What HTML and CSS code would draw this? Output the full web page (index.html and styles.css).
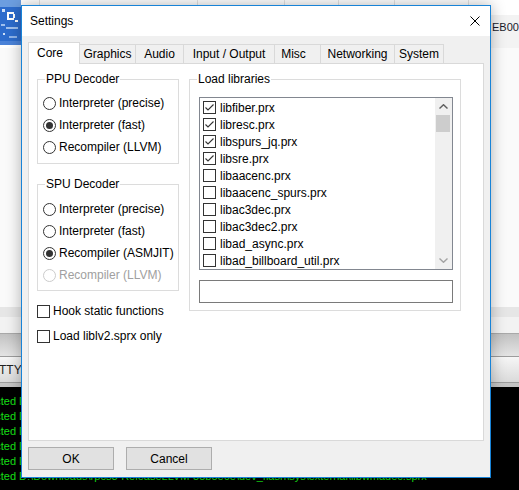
FILE: index.html
```html
<!DOCTYPE html>
<html>
<head>
<meta charset="utf-8">
<title>Settings</title>
<link rel="stylesheet" href="styles.css">
</head>
<body>
<div class="screen">
  <div class="app">
    <div class="app-head">
      <div class="app-icon">
        <svg width="21" height="45" viewBox="0 0 21 45">
          <rect width="21" height="45" fill="#2d6ccc"/>
          <rect width="21" height="7" fill="#6c9ee0"/>
          <rect x="2" y="9" width="3" height="3" fill="#cfe0f7"/>
          <rect x="7" y="12" width="2" height="8" fill="#ffffff"/>
          <rect x="9" y="12" width="5" height="2" fill="#ffffff"/>
          <rect x="9" y="18" width="5" height="2" fill="#ffffff"/>
          <rect x="13" y="14" width="2" height="4" fill="#ffffff"/>
          <rect x="15" y="20" width="3" height="2" fill="#ffffff"/>
          <rect x="1" y="24" width="4" height="2" fill="#9fc0ee"/>
          <rect x="6" y="27" width="12" height="2" fill="#9fc0ee"/>
          <rect x="3" y="33" width="2" height="2" fill="#cfe0f7"/>
          <rect x="9" y="36" width="8" height="2" fill="#8fb4ea"/>
          <rect x="0" y="41" width="21" height="4" fill="#4a82d8"/>
        </svg>
      </div>
      <div class="app-table">
        <div class="app-cols">
          <span class="col c1"></span><span class="col c2"></span><span class="col c3"></span><span class="col c4"></span><span class="col c5"></span><span class="col c6"></span>
        </div>
        <div class="app-row"><span class="serial">EB006</span></div>
      </div>
    </div>
    <div class="app-list"></div>
    <div class="app-bar1"></div>
    <div class="app-bar2"></div>
    <div class="app-grad"></div>
    <div class="app-tabrow"><span class="tty">TTY</span></div>
    <div class="app-under"></div>
    <div class="console">
      <div class="log">Detected D:\Downloads\rpcs3-ReleaseLLVM-55b5e6e\dev_flash\sys\external\libsre.sprx</div>
      <div class="log">Detected D:\Downloads\rpcs3-ReleaseLLVM-55b5e6e\dev_flash\sys\external\libspurs_jq.sprx</div>
      <div class="log">Detected D:\Downloads\rpcs3-ReleaseLLVM-55b5e6e\dev_flash\sys\external\libsync2.sprx</div>
      <div class="log">Detected D:\Downloads\rpcs3-ReleaseLLVM-55b5e6e\dev_flash\sys\external\libusbd.sprx</div>
      <div class="log">Detected D:\Downloads\rpcs3-ReleaseLLVM-55b5e6e\dev_flash\sys\external\libvdec.sprx</div>
      <div class="log">Detected D:\Downloads\rpcs3-ReleaseLLVM-55b5e6e\dev_flash\sys\external\libwmadec.sprx</div>
    </div>
  </div>

  <div class="dialog">
    <div class="titlebar">
      <span class="title">Settings</span>
      <svg class="close" width="10" height="10" viewBox="0 0 10 10"><path d="M0.5 0.5 L9.5 9.5 M9.5 0.5 L0.5 9.5" stroke="#000" stroke-width="1" fill="none"/></svg>
    </div>
    <div class="dlg-body">
      <div class="tabbar">
        <span class="tab active t-core">Core</span>
        <span class="tab t-gfx">Graphics</span>
        <span class="tab t-audio">Audio</span>
        <span class="tab t-io">Input / Output</span>
        <span class="tab t-misc">Misc</span>
        <span class="tab t-net">Networking</span>
        <span class="tab t-sys">System</span>
      </div>
      <div class="pane">
        <div class="col-left">
          <fieldset class="group ppu">
            <legend>PPU Decoder</legend>
            <label class="opt"><span class="radio"></span>Interpreter (precise)</label>
            <label class="opt"><span class="radio on"></span>Interpreter (fast)</label>
            <label class="opt"><span class="radio"></span>Recompiler (LLVM)</label>
          </fieldset>
          <fieldset class="group spu">
            <legend>SPU Decoder</legend>
            <label class="opt"><span class="radio"></span>Interpreter (precise)</label>
            <label class="opt"><span class="radio"></span>Interpreter (fast)</label>
            <label class="opt"><span class="radio on"></span>Recompiler (ASMJIT)</label>
            <label class="opt disabled"><span class="radio"></span>Recompiler (LLVM)</label>
          </fieldset>
          <div class="checks">
            <label class="opt"><span class="check"></span>Hook static functions</label>
            <label class="opt"><span class="check"></span>Load liblv2.sprx only</label>
          </div>
        </div>
        <fieldset class="group libs">
          <legend>Load libraries</legend>
          <div class="listbox">
            <div class="items">
              <div class="item"><span class="check"><svg width="11" height="11" viewBox="0 0 11 11"><path d="M1.5 5.5 L4 8 L9.5 2.5" stroke="#333" stroke-width="1.1" fill="none"/></svg></span>libfiber.prx</div>
              <div class="item"><span class="check"><svg width="11" height="11" viewBox="0 0 11 11"><path d="M1.5 5.5 L4 8 L9.5 2.5" stroke="#333" stroke-width="1.1" fill="none"/></svg></span>libresc.prx</div>
              <div class="item"><span class="check"><svg width="11" height="11" viewBox="0 0 11 11"><path d="M1.5 5.5 L4 8 L9.5 2.5" stroke="#333" stroke-width="1.1" fill="none"/></svg></span>libspurs_jq.prx</div>
              <div class="item"><span class="check"><svg width="11" height="11" viewBox="0 0 11 11"><path d="M1.5 5.5 L4 8 L9.5 2.5" stroke="#333" stroke-width="1.1" fill="none"/></svg></span>libsre.prx</div>
              <div class="item"><span class="check"></span>libaacenc.prx</div>
              <div class="item"><span class="check"></span>libaacenc_spurs.prx</div>
              <div class="item"><span class="check"></span>libac3dec.prx</div>
              <div class="item"><span class="check"></span>libac3dec2.prx</div>
              <div class="item"><span class="check"></span>libad_async.prx</div>
              <div class="item"><span class="check"></span>libad_billboard_util.prx</div>
            </div>
            <div class="vscroll">
              <span class="sb-btn"><svg width="9" height="5" viewBox="0 0 9 5"><path d="M0.5 4.5 L4.5 0.7 L8.5 4.5" stroke="#606060" stroke-width="1.4" fill="none"/></svg></span>
              <span class="thumb"></span>
              <span class="track"></span>
              <span class="sb-btn"><svg width="9" height="5" viewBox="0 0 9 5"><path d="M0.5 0.5 L4.5 4.3 L8.5 0.5" stroke="#a3a3a3" stroke-width="1.4" fill="none"/></svg></span>
            </div>
          </div>
          <div class="textbox"></div>
        </fieldset>
      </div>
      <div class="buttons">
        <button class="btn" type="button">OK</button>
        <button class="btn" type="button">Cancel</button>
      </div>
    </div>
  </div>
</div>
</body>
</html>
```
FILE: styles.css
```css
* { box-sizing: border-box; }
html, body { margin: 0; padding: 0; }
body {
  width: 519px;
  height: 490px;
  overflow: hidden;
  font-family: "Liberation Sans", Arial, sans-serif;
  font-size: 12px;
  color: #000;
}
.screen {
  position: relative;
  width: 519px;
  height: 490px;
  overflow: hidden;
  background: #fff;
}

/* ---------- background application ---------- */
.app { display: flex; flex-direction: column; height: 100%; }
.app-head { display: flex; height: 48px; flex: none; }
.app-icon { width: 21px; height: 45px; flex: none; }
.app-icon svg { display: block; }
.app-table { flex: 1; display: flex; flex-direction: column; }
.app-cols { height: 15px; display: flex; background: #fff; flex: none; }
.app-cols .col { height: 100%; border-right: 1px solid #e3e3e3; flex: none; }
.c1 { width: 19px; }
.c2 { width: 158px; }
.c3 { width: 87px; }
.c4 { width: 54px; }
.c5 { width: 56px; }
.c6 { width: 74px; }
.app-row {
  flex: 1;
  background: #f3f3f3;
  padding: 5px 0 0 471px;
  line-height: 14px;
  white-space: nowrap;
  overflow: hidden;
}
.serial { color: #1a1a2a; font-size: 11px; }
.app-list { height: 259px; flex: none; background: #fafafa; }
.app-bar1 { height: 10px; flex: none; background: #e6e6e6; }
.app-bar2 { height: 17px; flex: none; background: #f2f2f2; border-bottom: 1px solid #a9a9a9; }
.app-grad { height: 23px; flex: none; background: linear-gradient(#c2c2c2, #e4e4e4); border-bottom: 1px solid #9c9c9c; }
.app-tabrow {
  height: 26px;
  flex: none;
  background: linear-gradient(#f6f6f6, #dadada);
  border-bottom: 1px solid #9c9c9c;
  display: flex;
  align-items: center;
}
.tty { margin-left: -1px; font-size: 12px; color: #222; }
.app-under { height: 4px; flex: none; background: #c4c4c4; }
.console {
  flex: 1;
  background: #000;
  padding-top: 7px;
  overflow: hidden;
}
.log {
  color: #16e016;
  font-size: 11px;
  line-height: 15px;
  white-space: nowrap;
  margin-left: -28px;
}

/* ---------- dialog ---------- */
.dialog {
  position: absolute;
  left: 21px;
  top: 5px;
  width: 470px;
  height: 473px;
  border: 1px solid #1883d7;
  background: #f0f0f0;
  display: flex;
  flex-direction: column;
  box-shadow: 0 0 14px rgba(0, 0, 0, 0.3);
}
.titlebar {
  height: 30px;
  flex: none;
  background: #fff;
  display: flex;
  align-items: center;
  justify-content: space-between;
  padding: 0 10px 0 8px;
}
.title { line-height: 14px; }
.close { display: block; }

.dlg-body {
  flex: 1;
  display: flex;
  flex-direction: column;
  padding: 6px 6px 7px;
}
.tabbar {
  display: flex;
  height: 21px;
  flex: none;
  align-items: flex-start;
  position: relative;
  z-index: 1;
}
.tab {
  height: 19px;
  margin-top: 2px;
  margin-left: -1px;
  border: 1px solid #d9d9d9;
  border-bottom: none;
  background: #f0f0f0;
  text-align: center;
  line-height: 18px;
  white-space: nowrap;
  flex: none;
}
.tab.active {
  height: 22px;
  margin-top: 0;
  margin-left: 0;
  background: #fff;
  line-height: 20px;
  padding-right: 8px;
  position: relative;
  z-index: 2;
}
.t-core { width: 52px; }
.t-gfx { width: 57px; }
.t-audio { width: 49px; }
.t-io { width: 92px; }
.t-misc { width: 47px; padding-right: 8px; }
.t-net { width: 75px; }
.t-sys { width: 50px; }

.pane {
  height: 378px;
  flex: none;
  border: 1px solid #d9d9d9;
  background: #fff;
  display: flex;
  align-items: flex-start;
  gap: 10px;
  padding: 8px 0 0 8px;
}
.col-left { width: 142px; display: flex; flex-direction: column; }

.group {
  margin: 0;
  min-width: 0;
  border: 1px solid #dcdcdc;
}
.group legend {
  padding: 0 1px;
  margin-left: 2px;
  line-height: 14px;
}
.ppu { padding: 6px 0 5px 5px; }
.spu { padding: 7px 0 4px 5px; margin-top: 13px; }
.libs { width: 272px; padding: 11px 7px 7px 9px; }
.libs legend { margin-left: -2px; }

.opt {
  display: flex;
  align-items: center;
  gap: 3px;
  height: 22px;
  white-space: nowrap;
}
.opt.disabled { color: #a0a0a0; }
.radio {
  width: 13px;
  height: 13px;
  border: 1px solid #333;
  border-radius: 50%;
  background: #fff;
  flex: none;
  display: flex;
  align-items: center;
  justify-content: center;
}
.radio.on::after {
  content: "";
  width: 7px;
  height: 7px;
  border-radius: 50%;
  background: #333;
}
.opt.disabled .radio { border-color: #cccccc; }

.check {
  width: 13px;
  height: 13px;
  border: 1px solid #333;
  background: #fff;
  flex: none;
  display: flex;
}
.check svg { display: block; }

.checks {
  margin-top: 9px;
  display: flex;
  flex-direction: column;
  gap: 3px;
}

.listbox {
  height: 173px;
  border: 1px solid #828790;
  background: #fff;
  display: flex;
  overflow: hidden;
}
.items {
  flex: 1;
  padding: 1px 0 0 3px;
  overflow: hidden;
}
.item {
  height: 17px;
  display: flex;
  align-items: center;
  gap: 4px;
  white-space: nowrap;
}
.vscroll {
  width: 17px;
  flex: none;
  background: #f0f0f0;
  display: flex;
  flex-direction: column;
}
.sb-btn {
  height: 17px;
  flex: none;
  display: flex;
  align-items: center;
  justify-content: center;
}
.sb-btn svg { display: block; }
.thumb {
  height: 17px;
  flex: none;
  margin: 0 2px 0 1px;
  background: #cdcdcd;
}
.track { flex: 1; }
.textbox {
  height: 23px;
  margin-top: 10px;
  border: 1px solid #7a7a7a;
  background: #fff;
}

.buttons {
  display: flex;
  gap: 12px;
  margin-top: 6px;
  flex: none;
}
.btn {
  width: 86px;
  height: 23px;
  border: 1px solid #adadad;
  background: #e1e1e1;
  font-family: inherit;
  font-size: 12px;
  color: #000;
  padding: 0;
  margin: 0;
}
```
